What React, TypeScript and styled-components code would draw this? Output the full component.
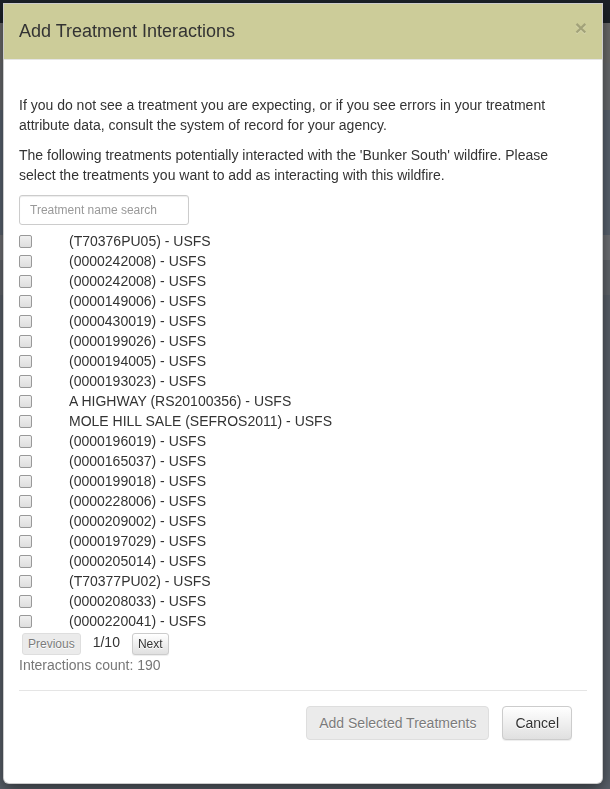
import React from "react";
import styled, { createGlobalStyle } from "styled-components";

const GlobalStyle = createGlobalStyle`
  html, body { margin: 0; padding: 0; }
  body {
    font-family: "Liberation Sans", Arial, Helvetica, sans-serif;
    font-size: 14px;
    line-height: 20px;
    color: #333;
    background: #5a616a;
    overflow: hidden;
  }
  * { box-sizing: border-box; }
`;

const Backdrop = styled.div`
  position: fixed;
  inset: 0;
  background: linear-gradient(
    to bottom,
    #1c2229 0 23px,
    #6b6b6b 23px 63px,
    #696b6e 63px 110px,
    #5b6470 110px 235px,
    #707276 235px 260px,
    #62666c 260px 295px,
    #5a616a 295px
  );
`;

const Dialog = styled.div`
  position: absolute;
  top: 3px;
  left: 3px;
  width: 600px;
  background: #fff;
  border: 1px solid rgba(0, 0, 0, 0.2);
  border-radius: 0 0 6px 6px;
  box-shadow: 0 5px 15px rgba(0, 0, 0, 0.5);
  overflow: hidden;
`;

const Header = styled.div`
  display: flex;
  align-items: flex-start;
  justify-content: space-between;
  padding: 15px;
  background: #cccc99;
  border-bottom: 1px solid #e5e5e5;
`;

const Title = styled.h4`
  margin: 0;
  font-size: 18px;
  line-height: 25px;
  font-weight: normal;
  color: #333;
`;

const Close = styled.button`
  margin-top: -2px;
  padding: 0;
  border: 0;
  background: none;
  font-family: "Liberation Sans", Arial, sans-serif;
  font-size: 21px;
  font-weight: bold;
  line-height: 1;
  color: #000;
  opacity: 0.2;
  text-shadow: 0 1px 0 #fff;
`;

const Body = styled.div`
  padding: 35px 15px 43px;
`;

const Paragraph = styled.p`
  margin: 0 0 10px;
`;

const SearchInput = styled.input`
  display: block;
  width: 170px;
  height: 30px;
  margin: 0 0 6px;
  padding: 5px 10px;
  font-family: inherit;
  font-size: 12px;
  line-height: 18px;
  color: #555;
  border: 1px solid #ccc;
  border-radius: 3px;
  box-shadow: inset 0 1px 1px rgba(0, 0, 0, 0.075);
  &::placeholder { color: #999; }
`;

const List = styled.div`
  display: flex;
  flex-direction: column;
`;

const Row = styled.label`
  display: grid;
  grid-template-columns: 50px 1fr;
  align-items: center;
  height: 20px;
`;

const Check = styled.input`
  appearance: none;
  width: 13px;
  height: 13px;
  margin: 0;
  border: 1px solid #999;
  border-radius: 2px;
  background: linear-gradient(to bottom, #f0f0f0, #dedede);
`;

const Pager = styled.div`
  display: flex;
  align-items: flex-start;
  height: 22px;
  margin-top: 2px;
  padding-left: 3px;
`;

const PagerButton = styled.button`
  height: 22px;
  padding: 1px 5px;
  font-family: inherit;
  font-size: 12px;
  line-height: 18px;
  color: #333;
  border: 1px solid #ccc;
  border-radius: 3px;
  background-image: linear-gradient(to bottom, #fff 0, #e0e0e0 100%);
  box-shadow: inset 0 1px 0 rgba(255, 255, 255, 0.15), 0 1px 1px rgba(0, 0, 0, 0.075);
  text-shadow: 0 1px 0 #fff;
  &:disabled {
    background: #e0e0e0;
    opacity: 0.65;
    box-shadow: none;
  }
`;

const PageLabel = styled.span`
  margin: 0 12px;
  line-height: 18px;
`;

const Count = styled.div`
  color: #777;
`;

const Divider = styled.hr`
  margin: 15px 0;
  border: 0;
  border-top: 1px solid #e5e5e5;
`;

const Footer = styled.div`
  display: flex;
  justify-content: flex-end;
  gap: 13px;
  padding-right: 15px;
`;

const Button = styled.button`
  height: 34px;
  padding: 6px 12px;
  font-family: inherit;
  font-size: 14px;
  line-height: 20px;
  color: #333;
  border: 1px solid #ccc;
  border-radius: 4px;
  background-image: linear-gradient(to bottom, #fff 0, #e0e0e0 100%);
  box-shadow: inset 0 1px 0 rgba(255, 255, 255, 0.15), 0 1px 1px rgba(0, 0, 0, 0.075);
  text-shadow: 0 1px 0 #fff;
  &:disabled {
    background: #e0e0e0;
    opacity: 0.65;
    box-shadow: none;
  }
`;

const treatments = [
  "(T70376PU05) - USFS",
  "(0000242008) - USFS",
  "(0000242008) - USFS",
  "(0000149006) - USFS",
  "(0000430019) - USFS",
  "(0000199026) - USFS",
  "(0000194005) - USFS",
  "(0000193023) - USFS",
  "A HIGHWAY (RS20100356) - USFS",
  "MOLE HILL SALE (SEFROS2011) - USFS",
  "(0000196019) - USFS",
  "(0000165037) - USFS",
  "(0000199018) - USFS",
  "(0000228006) - USFS",
  "(0000209002) - USFS",
  "(0000197029) - USFS",
  "(0000205014) - USFS",
  "(T70377PU02) - USFS",
  "(0000208033) - USFS",
  "(0000220041) - USFS",
];

export default function App() {
  return (
    <>
      <GlobalStyle />
      <Backdrop />
      <Dialog>
        <Header>
          <Title>Add Treatment Interactions</Title>
          <Close aria-label="Close">×</Close>
        </Header>
        <Body>
          <Paragraph>
            If you do not see a treatment you are expecting, or if you see errors in your treatment
            attribute data, consult the system of record for your agency.
          </Paragraph>
          <Paragraph>
            The following treatments potentially interacted with the 'Bunker South' wildfire. Please
            select the treatments you want to add as interacting with this wildfire.
          </Paragraph>
          <SearchInput placeholder="Treatment name search" />
          <List>
            {treatments.map((t, i) => (
              <Row key={i}>
                <Check type="checkbox" />
                <span>{t}</span>
              </Row>
            ))}
          </List>
          <Pager>
            <PagerButton disabled>Previous</PagerButton>
            <PageLabel>1/10</PageLabel>
            <PagerButton>Next</PagerButton>
          </Pager>
          <Count>Interactions count: 190</Count>
          <Divider />
          <Footer>
            <Button disabled>Add Selected Treatments</Button>
            <Button>Cancel</Button>
          </Footer>
        </Body>
      </Dialog>
    </>
  );
}
